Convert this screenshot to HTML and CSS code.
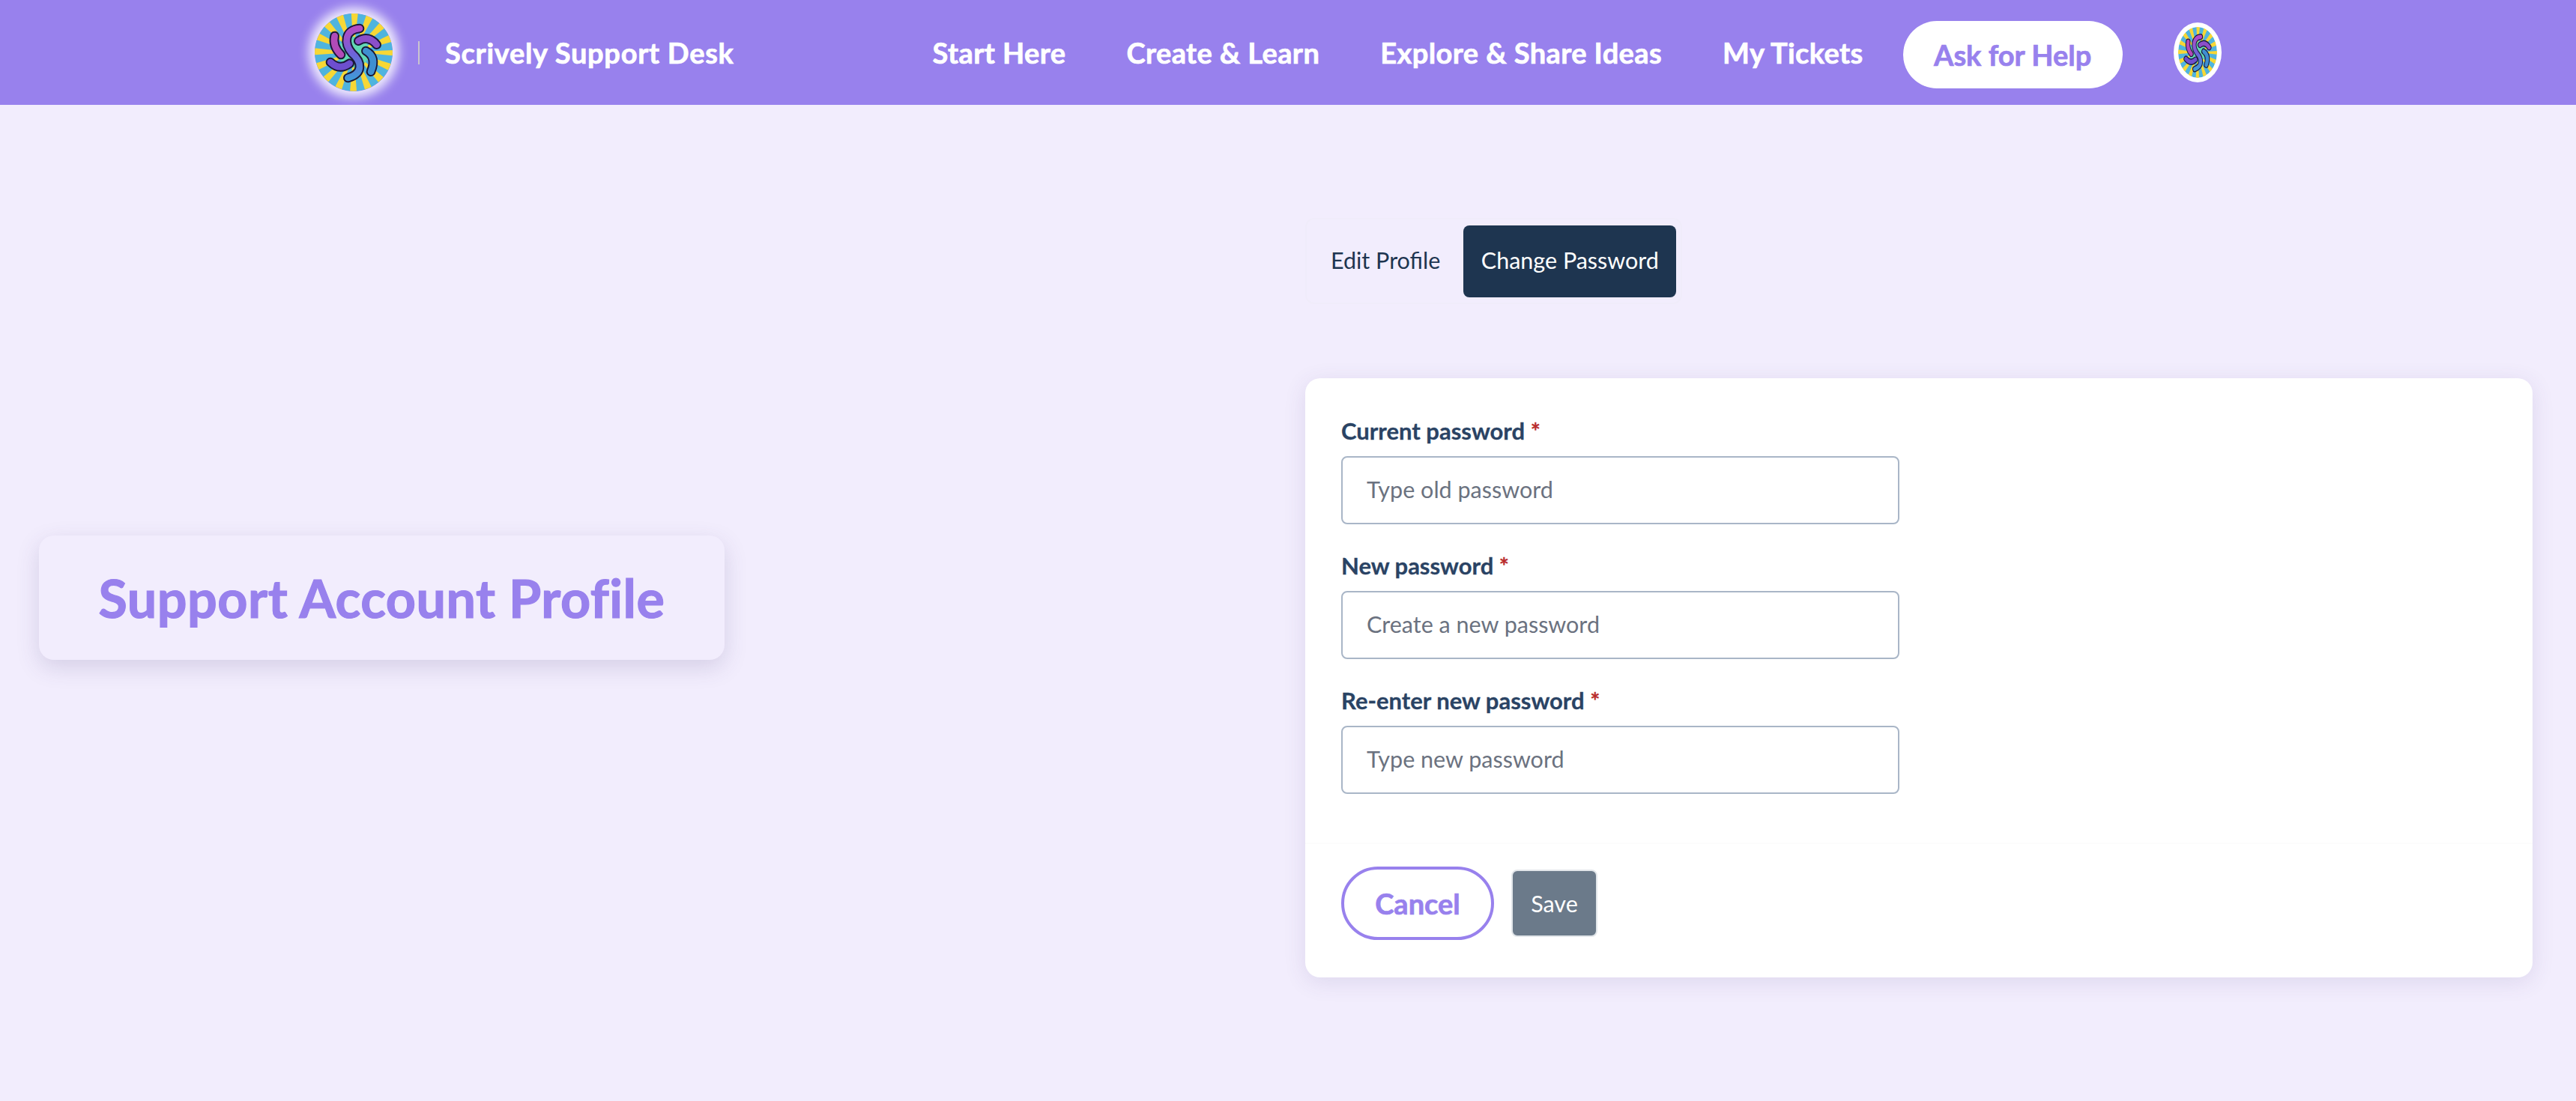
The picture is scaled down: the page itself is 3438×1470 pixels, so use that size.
FILE: index.html
```html
<!DOCTYPE html>
<html lang="en">
<head>
<meta charset="utf-8">
<title>Scrively Support Desk</title>
<link rel="stylesheet" href="styles.css">
</head>
<body>
<header class="topbar">
  <a class="brand" href="#">
    <span class="brand-logo">
      <svg class="logo-art" viewBox="45 45 312 312" preserveAspectRatio="none" aria-hidden="true">
        <defs>
          <linearGradient id="swoosh-main" gradientUnits="userSpaceOnUse" x1="190" y1="100" x2="200" y2="310">
            <stop offset="0" stop-color="#b54bc4"/><stop offset=".5" stop-color="#6f62d8"/><stop offset="1" stop-color="#3f9bd8"/>
          </linearGradient>
          <g id="logo-mark">
            <circle cx="201" cy="200" r="156" fill="#4fb4de"/>
            <circle class="rays" cx="201" cy="200" r="78"/>
            <circle cx="201" cy="200" r="62" fill="#62d9b4"/>
            <g class="sw-outline">
              <path d="M125 135Q115 175 150 210"/>
              <path d="M225 105C165 110 160 165 195 205C235 240 240 285 178 303"/>
              <path d="M220 155Q260 130 293 170"/>
              <path d="M108 240Q145 275 185 245"/>
              <path d="M250 195Q295 220 270 278"/>
            </g>
            <g class="sw">
              <path stroke="#b14bb8" d="M125 135Q115 175 150 210"/>
              <path stroke="url(#swoosh-main)" d="M225 105C165 110 160 165 195 205C235 240 240 285 178 303"/>
              <path stroke="#8b4fc9" d="M220 155Q260 130 293 170"/>
              <path stroke="#6d4fcf" d="M108 240Q145 275 185 245"/>
              <path stroke="#3f8fd0" d="M250 195Q295 220 270 278"/>
            </g>
          </g>
        </defs>
        <use href="#logo-mark"/>
      </svg>
    </span>
    <span class="brand-sep"></span>
    <span class="brand-name">Scrively Support Desk</span>
  </a>
  <nav class="nav">
    <a href="#">Start Here</a>
    <a href="#">Create &amp; Learn</a>
    <a href="#">Explore &amp; Share Ideas</a>
    <a href="#">My Tickets</a>
  </nav>
  <a class="help-btn" href="#">Ask for Help</a>
  <span class="avatar">
    <svg class="logo-art" viewBox="45 45 312 312" preserveAspectRatio="none" aria-hidden="true"><use href="#logo-mark"/></svg>
  </span>
</header>

<main class="page">
  <section class="side">
    <h1 class="side-title">Support Account Profile</h1>
  </section>
  <section class="content">
    <div class="tabs">
      <button class="tab" type="button">Edit Profile</button>
      <button class="tab tab-active" type="button">Change Password</button>
    </div>
    <form class="card">
      <div class="card-body">
        <div class="field">
          <label class="label" for="cur">Current password <span class="req">*</span></label>
          <input class="input" id="cur" type="password" placeholder="Type old password">
        </div>
        <div class="field">
          <label class="label" for="new">New password <span class="req">*</span></label>
          <input class="input" id="new" type="password" placeholder="Create a new password">
        </div>
        <div class="field">
          <label class="label" for="again">Re-enter new password <span class="req">*</span></label>
          <input class="input" id="again" type="password" placeholder="Type new password">
        </div>
      </div>
      <div class="card-foot">
        <button class="btn-cancel" type="button">Cancel</button>
        <button class="btn-save" type="button">Save</button>
      </div>
    </form>
  </section>
</main>
</body>
</html>
```
FILE: styles.css
```css
* { box-sizing: border-box; }
html, body { margin: 0; height: 100%; }
body {
  background: #f2edfd;
  font-family: "Lato", "Noto Sans", sans-serif;
  font-variant-ligatures: none;
  color: #1e3550;
  overflow: hidden;
}
a { text-decoration: none; color: inherit; }

.topbar {
  display: flex;
  align-items: center;
  height: 140px;
  padding-left: 420px;
  background: #9881ed;
  color: #fff;
  font-weight: 700;
  -webkit-text-stroke: .7px currentColor;
}
.brand { display: flex; align-items: center; }
.brand-logo {
  display: block;
  width: 104px;
  height: 104px;
  border-radius: 50%;
  overflow: hidden;
  box-shadow: 0 0 14px 8px rgba(255, 255, 255, .85);
}
.logo-art { display: block; width: 100%; height: 100%; filter: blur(.6px); }
.rays { fill: none; stroke: #f7d735; stroke-width: 156; stroke-dasharray: 14 16.6; stroke-dashoffset: 7; }
.sw-outline path { fill: none; stroke: #1a1838; stroke-width: 38; stroke-linecap: round; }
.sw path { fill: none; stroke-width: 26; stroke-linecap: round; }
.brand-sep { width: 2px; height: 31px; margin: 0 34px; background: #c9c4cf; }
.brand-name { font-size: 38px; letter-spacing: .7px; }

.nav { display: flex; gap: 81px; margin-left: 265px; font-size: 38px; letter-spacing: .4px; }
.help-btn {
  display: flex;
  align-items: center;
  justify-content: center;
  width: 293px;
  height: 90px;
  margin: 6px 0 0 53px;
  border-radius: 45px;
  background: #fff;
  color: #9881ed;
  font-size: 38px;
}
.avatar {
  display: block;
  width: 64px;
  height: 80px;
  margin-left: 68px;
  border: 6px solid #fff;
  border-radius: 50%;
  overflow: hidden;
  background: #fff;
}

.page {
  display: grid;
  grid-template-columns: 915px 1638px;
  justify-content: space-between;
  align-items: center;
  height: 1316px;
  padding: 0 58px 0 52px;
}
.side-title {
  display: flex;
  align-items: center;
  justify-content: center;
  height: 166px;
  margin: 0;
  background: #f2edfd;
  border-radius: 20px;
  box-shadow: 0 10px 30px rgba(70, 60, 120, .17);
  color: #9881ed;
  font-size: 70px;
  font-weight: 700;
  letter-spacing: .5px;
  -webkit-text-stroke: 1.2px currentColor;
}

.tabs {
  display: inline-flex;
  align-items: center;
  height: 115px;
  padding: 0 6px 0 32px;
  margin-bottom: 99px;
  border: 2px solid #f0ecfa;
  border-radius: 12px;
}
.tab {
  border: 0;
  background: none;
  color: #1e3550;
  font: 400 30.5px "Lato", sans-serif;
  padding: 0 0 3px;
  margin-right: 31px;
}
.tab-active {
  width: 284px;
  height: 96px;
  margin-right: 0;
  background: #1e3550;
  color: #fff;
  border-radius: 8px;
}
.card {
  background: #fff;
  border-radius: 20px;
  box-shadow: 0 6px 30px rgba(70, 60, 120, .12);
  height: 800px;
}
.card-body {
  height: 622px;
  padding: 50px 48px 0;
  border-bottom: 2px solid #fcfcfc;
}
.field { margin-bottom: 35px; }
.label {
  display: block;
  height: 54px;
  font-size: 31px;
  font-weight: 700;
  line-height: 40px;
  color: #2a4364;
  -webkit-text-stroke: .3px currentColor;
}
.req { color: #b92c2c; }
.input {
  display: block;
  width: 745px;
  height: 91px;
  padding: 0 32px 3px;
  border: 2px solid #a9b6c7;
  border-radius: 8px;
  background: #fff;
  font: 400 30.5px "Lato", sans-serif;
  color: #1e3550;
}
.input::placeholder { color: #6b7280; opacity: 1; }
.card-foot {
  display: flex;
  align-items: center;
  gap: 23px;
  padding: 30px 48px 0;
}
.btn-cancel {
  width: 204px;
  height: 98px;
  border: 4px solid #9881ed;
  border-radius: 49px;
  background: #fff;
  color: #9881ed;
  font: 700 38px "Lato", sans-serif;
  -webkit-text-stroke: .7px currentColor;
}
.btn-save {
  width: 115px;
  height: 90px;
  border: 2px solid #e2e6ea;
  border-radius: 8px;
  background: #6b7a8a;
  color: #fff;
  font: 400 30.5px "Lato", sans-serif;
}
```
